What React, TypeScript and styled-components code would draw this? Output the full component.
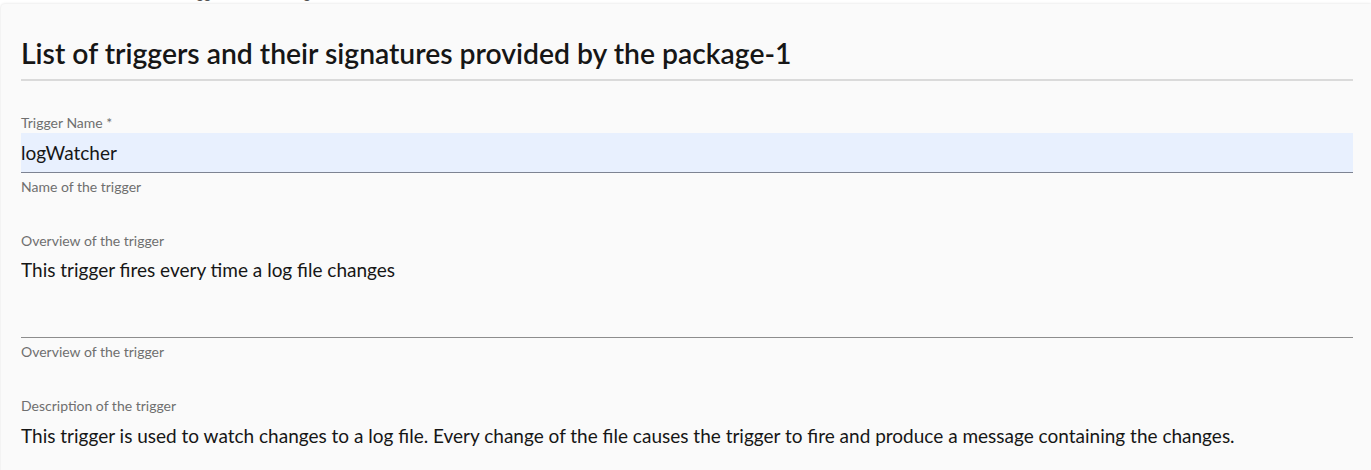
import styled, { createGlobalStyle } from "styled-components";

const GlobalStyle = createGlobalStyle`
  html, body {
    margin: 0;
    padding: 0;
    background: #ffffff;
    overflow: hidden;
  }
  body {
    font-family: Lato, "Liberation Sans", sans-serif;
    color: #161616;
  }
`;

const Page = styled.div`
  display: flex;
  flex-direction: column;
  margin-top: -16px;
`;

// only the descenders of this line peek in above the card
const Intro = styled.p`
  margin: 0 0 2px;
  padding-left: 140px;
  font-size: 14.4px;
  line-height: 18px;
  color: #525252;
`;

const Card = styled.section`
  display: flex;
  flex-direction: column;
  margin: 0 0 0 1px;
  padding: 0 18px 40px 20px;
  background: #fafafa;
  border-radius: 4px 0 0 0;
  box-shadow: 0 0 3px rgba(0, 0, 0, 0.14);
`;

const Heading = styled.h2`
  margin: 0;
  padding: 31px 0 8px;
  font-size: 28.3px;
  line-height: 36px;
  font-weight: 600;
  color: #161616;
  border-bottom: 2px solid #dadada;
`;

const Field = styled.div<{ $top: number }>`
  display: flex;
  flex-direction: column;
  margin-top: ${(p) => p.$top}px;
`;

const Label = styled.label`
  font-size: 14px;
  line-height: 16px;
  color: #6f6f6f;
`;

const Helper = styled.span`
  margin-top: 6px;
  font-size: 14px;
  line-height: 16px;
  color: #6f6f6f;
`;

const TextInput = styled.input`
  box-sizing: border-box;
  height: 40px;
  margin-top: 2px;
  padding: 0;
  border: none;
  border-bottom: 1px solid #7d8392;
  background: #e8f0fe;
  font-family: inherit;
  font-size: 19px;
  color: #161616;
  outline: none;
`;

const TextArea = styled.textarea`
  box-sizing: border-box;
  height: 81px;
  margin-top: 8px;
  padding: 0;
  border: none;
  border-bottom: 1px solid #8d8d8d;
  background: transparent;
  font-family: inherit;
  font-size: 19px;
  line-height: 26px;
  color: #161616;
  resize: none;
  outline: none;
`;

const Value = styled.p`
  margin: 9px 0 0;
  font-size: 19px;
  line-height: 26px;
  color: #161616;
`;

export default function App() {
  return (
    <>
      <GlobalStyle />
      <Page>
        <Intro>List of triggers and their signatures</Intro>
        <Card>
          <Heading>List of triggers and their signatures provided by the package-1</Heading>

          <Field $top={34}>
            <Label>Trigger Name *</Label>
            <TextInput readOnly value="logWatcher" />
            <Helper>Name of the trigger</Helper>
          </Field>

          <Field $top={38}>
            <Label>Overview of the trigger</Label>
            <TextArea readOnly value="This trigger fires every time a log file changes" />
            <Helper>Overview of the trigger</Helper>
          </Field>

          <Field $top={38}>
            <Label>Description of the trigger</Label>
            <Value>
              This trigger is used to watch changes to a log file. Every change of the file causes the
              trigger to fire and produce a message containing the changes.
            </Value>
          </Field>
        </Card>
      </Page>
    </>
  );
}
